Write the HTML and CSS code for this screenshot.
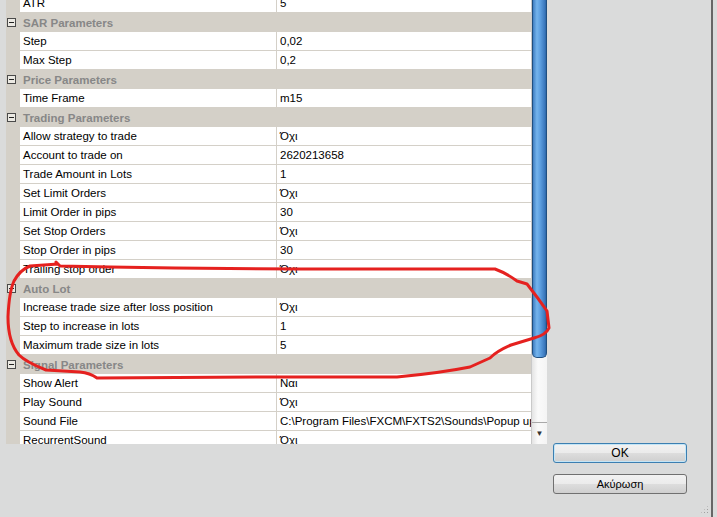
FILE: index.html
```html
<!DOCTYPE html>
<html>
<head lang="el">
    <meta charset="UTF-8">
    <title>Parameters</title>
    <link rel="stylesheet" href="styles.css">
</head>
<body>
<div class="dialog">
    <div class="props">
        <div class="grid">
            <div class="rows">
                <div class="row"><span class="name">ATR</span><span class="value">5</span></div>
                <div class="group"><span class="toggle"></span>SAR Parameters</div>
                <div class="row"><span class="name">Step</span><span class="value">0,02</span></div>
                <div class="row"><span class="name">Max Step</span><span class="value">0,2</span></div>
                <div class="group"><span class="toggle"></span>Price Parameters</div>
                <div class="row"><span class="name">Time Frame</span><span class="value">m15</span></div>
                <div class="group"><span class="toggle"></span>Trading Parameters</div>
                <div class="row"><span class="name">Allow strategy to trade</span><span class="value">Όχι</span></div>
                <div class="row"><span class="name">Account to trade on</span><span class="value">2620213658</span></div>
                <div class="row"><span class="name">Trade Amount in Lots</span><span class="value">1</span></div>
                <div class="row"><span class="name">Set Limit Orders</span><span class="value">Όχι</span></div>
                <div class="row"><span class="name">Limit Order in pips</span><span class="value">30</span></div>
                <div class="row"><span class="name">Set Stop Orders</span><span class="value">Όχι</span></div>
                <div class="row"><span class="name">Stop Order in pips</span><span class="value">30</span></div>
                <div class="row"><span class="name">Trailing stop order</span><span class="value">Όχι</span></div>
                <div class="group"><span class="toggle"></span>Auto Lot</div>
                <div class="row"><span class="name">Increase trade size after loss position</span><span class="value">Όχι</span></div>
                <div class="row"><span class="name">Step to increase in lots</span><span class="value">1</span></div>
                <div class="row"><span class="name">Maximum trade size in lots</span><span class="value">5</span></div>
                <div class="group"><span class="toggle"></span>Signal Parameters</div>
                <div class="row"><span class="name">Show Alert</span><span class="value">Ναι</span></div>
                <div class="row"><span class="name">Play Sound</span><span class="value">Όχι</span></div>
                <div class="row"><span class="name">Sound File</span><span class="value">C:\Program Files\FXCM\FXTS2\Sounds\Popup up.wav</span></div>
                <div class="row"><span class="name">RecurrentSound</span><span class="value">Όχι</span></div>
                <div class="row"><span class="name">RecurrentCount</span><span class="value">10</span></div>
            </div>
        </div>
        <div class="scrollbar">
            <div class="thumb"></div>
            <div class="track"></div>
            <div class="arrow">&#9660;</div>
        </div>
    </div>

    <div class="buttons">
        <button class="btn default">OK</button>
        <button class="btn">Ακύρωση</button>
    </div>

    <div class="grip"></div>

    <!-- hand drawn marker round the Auto Lot group -->
    <svg class="marker" width="717" height="517" viewBox="0 0 717 517">
        <path d="M56 262 L60 266 L110 267 L175 268 L300 269 L495 269 Q506 273 517 281 L527 284 Q538 298 547 311 L549 328 Q546 335 534 338 L511 345 Q497 351 490 358 L470 367 Q440 373 397 377 L270 377 L97 378 Q90 373 80 372 L46 370 Q26 362 19 355 Q8 342 8 317 Q9 292 14 281 Q20 270 30 266 L58 264"
              fill="none" stroke="#e5211f" stroke-width="3" stroke-linejoin="round" stroke-linecap="round"/>
    </svg>
</div>
</body>
</html>
```

FILE: styles.css
```css
html, body {
    margin: 0;
    padding: 0;
}

body {
    background: #dadbdb;
    font-family: 'Liberation Sans', Arial, sans-serif;
}

.dialog {
    position: relative;
    display: flex;
    align-items: flex-start;
    width: 713px;
    height: 517px;
    padding-left: 6px;
    box-sizing: border-box;
    background: #dadbdb;
    border-right: 2px solid #666;
    overflow: hidden;
}

.props {
    display: flex;
    height: 444px;
}

.grid {
    width: 525px;
    height: 444px;
    overflow: hidden;
    background: #d4d0c8;
    font-size: 11.5px;
}

.rows {
    margin-top: -6px;
}

.row {
    display: flex;
    height: 18px;
    line-height: 18px;
    margin-left: 14px;
    border-bottom: 1px solid #d4d0c8;
    color: #000;
    white-space: nowrap;
}

.row .name {
    width: 257px;
    padding-left: 3px;
    box-sizing: border-box;
    border-right: 1px solid #d4d0c8;
    background: #fff;
}

.row .value {
    flex: 1;
    padding-left: 3px;
    background: #fff;
    overflow: hidden;
}

.group {
    display: flex;
    align-items: center;
    height: 19px;
    background: #d4d0c8;
    color: #878787;
    font-weight: bold;
    white-space: nowrap;
}

.toggle {
    position: relative;
    width: 9px;
    height: 9px;
    margin: 0 7px 0 1px;
    box-sizing: border-box;
    border: 1px solid #4a4a4a;
    background: #ebe9e3;
}

.toggle:after {
    content: '';
    position: absolute;
    left: 1px;
    right: 1px;
    top: 3px;
    height: 1px;
    background: #222;
}

.scrollbar {
    display: flex;
    flex-direction: column;
    width: 16px;
    height: 444px;
    background: linear-gradient(to right, #e4e4e4, #fafafa 40%, #f4f4f4);
    border-left: 1px solid #c9c9c9;
    box-sizing: border-box;
}

.scrollbar .thumb {
    height: 358px;
    box-sizing: border-box;
    border: 1px solid #1f4f80;
    border-top: none;
    border-radius: 0 0 5px 5px;
    background: linear-gradient(to right, #3f7ec2, #75b4ec 30%, #5d9fe0 55%, #3a78bd 90%, #2d65a4);
}

.scrollbar .track {
    flex: 1;
}

.scrollbar .arrow {
    height: 21px;
    border-top: 1px solid #a9a9a9;
    font-size: 8px;
    line-height: 21px;
    text-align: center;
    color: #333;
}

.buttons {
    display: flex;
    flex-direction: column;
    gap: 11px;
    margin-left: 6px;
    padding-top: 443px;
}

.btn {
    width: 134px;
    height: 20px;
    padding: 0;
    box-sizing: border-box;
    border: 1px solid #707070;
    border-radius: 3px;
    background: linear-gradient(#f2f2f2 0%, #ebebeb 50%, #dddddd 51%, #cfcfcf 100%);
    font-family: 'Liberation Sans', Arial, sans-serif;
    font-size: 11px;
    color: #000;
}

.btn.default {
    border-color: #3c7fb1;
    box-shadow: inset 0 0 0 1px #c4e5f6;
    font-size: 12px;
}

.grip {
    position: absolute;
    right: 2px;
    bottom: 3px;
    width: 9px;
    height: 9px;
    background: radial-gradient(circle, #a0a0a0 0.8px, transparent 1px) 0 0 / 3px 3px;
    clip-path: polygon(100% 0, 100% 100%, 0 100%);
}

.marker {
    position: absolute;
    left: 0;
    top: 0;
    pointer-events: none;
}
```
